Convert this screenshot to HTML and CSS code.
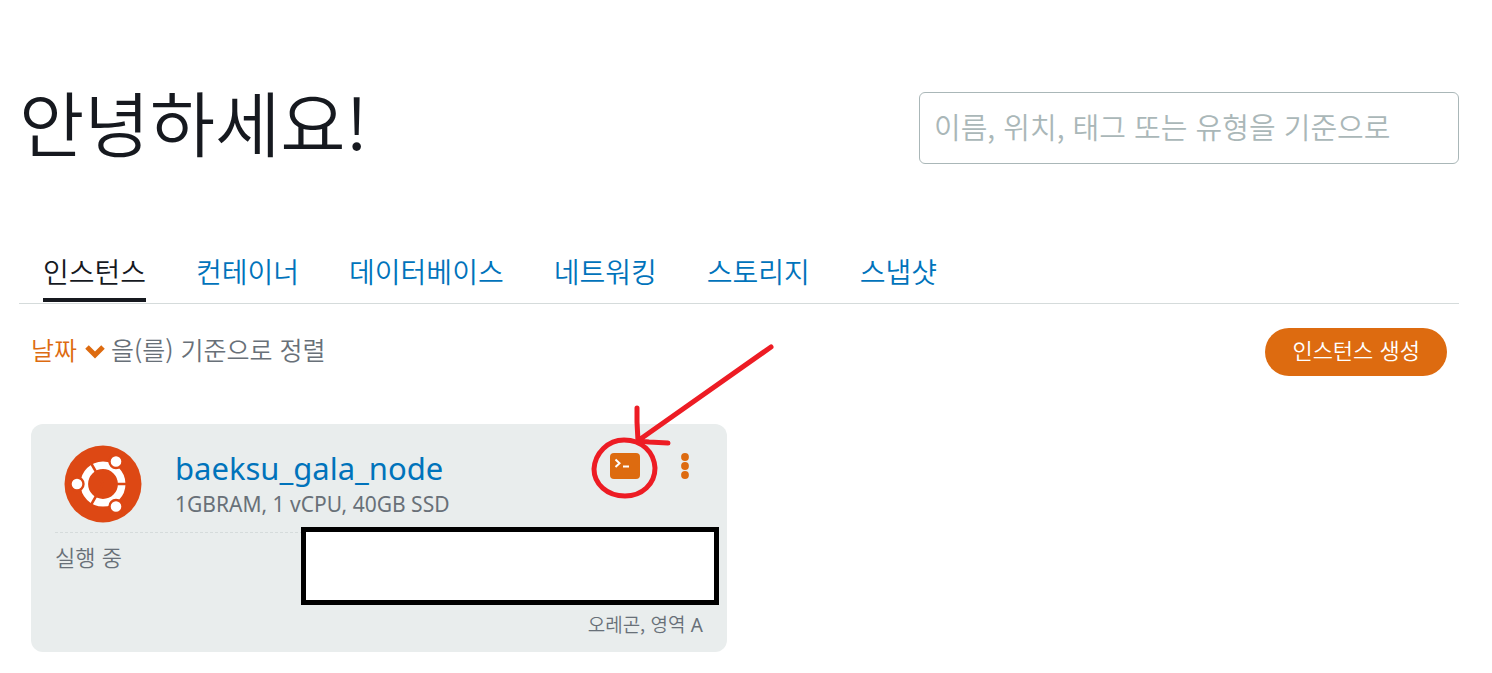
FILE: index.html
```
<!DOCTYPE html>
<html lang="ko">
<head>
    <meta charset="UTF-8">
    <meta name="viewport" content="width=device-width, initial-scale=1.0">
    <title>인스턴스</title>
    <link rel="stylesheet" href="styles.css">
</head>
<body>
    <header class="page-header">
        <h1>안녕하세요!</h1>
        <input type="search" class="search" aria-label="검색" placeholder="이름, 위치, 태그 또는 유형을 기준으로">
    </header>

    <nav class="tabs">
        <a href="#instances" class="active">인스턴스</a>
        <a href="#containers">컨테이너</a>
        <a href="#databases">데이터베이스</a>
        <a href="#networking">네트워킹</a>
        <a href="#storage">스토리지</a>
        <a href="#snapshots">스냅샷</a>
    </nav>

    <main>
        <div class="toolbar">
            <div class="sort">
                <button type="button" class="sort-button">날짜
                    <svg width="20" height="20" viewBox="0 0 20 20"><path d="M2 8l8 8 8-8" fill="none" stroke="#dd6b10" stroke-width="5"/></svg>
                </button>
                <span>을(를) 기준으로 정렬</span>
            </div>
            <button type="button" class="create-button">인스턴스 생성</button>
        </div>

        <div class="cards">
            <article class="card">
                <div class="card-top">
                    <!-- Ubuntu -->
                    <svg class="logo" width="78" height="78" viewBox="0 0 78 78">
                        <circle cx="39" cy="39" r="38.5" fill="#dd4814"/>
                        <circle cx="39" cy="39" r="18.7" fill="none" stroke="#fff" stroke-width="7.6"/>
                        <path d="M39 39h24M39 39L27 18.2M39 39L27 59.8" stroke="#dd4814" stroke-width="2.6"/>
                        <g fill="#fff" stroke="#dd4814" stroke-width="2.4">
                            <circle cx="13" cy="39" r="6.5"/>
                            <circle cx="52" cy="16.5" r="6.5"/>
                            <circle cx="52" cy="61.5" r="6.5"/>
                        </g>
                    </svg>
                    <div class="info">
                        <h2><a href="#baeksu_gala_node">baeksu_gala_node</a></h2>
                        <p>1GBRAM, 1 vCPU, 40GB SSD</p>
                    </div>
                    <div class="actions">
                        <button type="button" class="icon-button" aria-label="터미널 연결">
                            <svg width="30" height="26" viewBox="0 0 30 26">
                                <rect width="30" height="26" rx="4" fill="#dd6b10"/>
                                <path d="M5.5 6.5l4 3.7-4 3.7M13 13.5h6" fill="none" stroke="#fff" stroke-width="2"/>
                            </svg>
                        </button>
                        <button type="button" class="icon-button" aria-label="메뉴">
                            <svg width="8" height="26" viewBox="0 0 8 26" fill="#dd6b10"><circle cx="4" cy="4" r="3.9"/><circle cx="4" cy="13" r="3.9"/><circle cx="4" cy="22" r="3.9"/></svg>
                        </button>
                        <!-- 터미널 버튼 표시 -->
                        <svg class="marker" width="190" height="160" viewBox="0 0 190 160" fill="none" stroke="#ed1c24" stroke-width="5" stroke-linecap="round" stroke-linejoin="round">
                            <path d="M181 7L49 100M47 68v14l1 19M49 101l10 1 19 1"/>
                            <path d="M34 100C18 100 5 113 4 129C4 144 17 156 35 156C52 156 65 144 65 128C64 112 52 100 34 100Z"/>
                        </svg>
                    </div>
                </div>
                <div class="status">실행 중</div>
                <div class="region">오레곤, 영역 <span>A</span></div>
                <div class="cover"></div>
            </article>
        </div>
    </main>
</body>
</html>
```
FILE: styles.css
```
* {
    box-sizing: border-box;
}
body {
    margin: 0;
    padding: 80px 33px 20px 19px;
    background: #fff;
    color: #16191f;
    font-family: "Noto Sans CJK KR", sans-serif;
    font-weight: 350;
}
h1,
h2,
p {
    margin: 0;
    font-weight: 350;
}
a {
    color: #0073bb;
    text-decoration: none;
}
button {
    padding: 0;
    border: none;
    background: none;
    font: inherit;
    cursor: pointer;
}
svg {
    display: block;
}

.page-header {
    display: flex;
    justify-content: space-between;
    align-items: center;
    height: 96px;
}
h1 {
    padding-bottom: 16px;
    font-size: 71px;
    line-height: 96px;
}
.search {
    width: 540px;
    height: 72px;
    padding: 0 14px 4px;
    border: 1px solid #aab7b8;
    border-radius: 6px;
    font: inherit;
    font-size: 29px;
}
.search::placeholder {
    color: #aab7b8;
    opacity: 1;
}

.tabs {
    display: flex;
    gap: 50px;
    margin-top: 68px;
    padding: 0 24px 1px;
    border-bottom: 1px solid #d5dbdb;
    font-size: 28px;
    line-height: 54px;
}
.tabs a {
    border-bottom: 4px solid transparent;
}
.tabs .active {
    color: #16191f;
    border-color: #16191f;
}

main {
    padding: 24px 12px 0;
}
.toolbar,
.sort,
.sort-button {
    display: flex;
    align-items: center;
}
.toolbar {
    justify-content: space-between;
    height: 48px;
}
.sort {
    gap: 6px;
    padding-bottom: 6px;
    color: #687078;
    font-size: 25px;
}
.sort-button {
    gap: 8px;
    color: #dd6b10;
}
.create-button {
    height: 48px;
    padding: 0 27px 6px;
    border-radius: 24px;
    background: #dd6b10;
    color: #fff;
    font-size: 22px;
}

.cards {
    display: grid;
    grid-template-columns: 1fr 1fr;
    gap: 24px;
    margin-top: 48px;
}
.card {
    position: relative;
    padding: 20px 24px 12px;
    border-radius: 12px;
    background: #e9eded;
    color: #687078;
}
.card-top {
    display: flex;
    height: 89px;
    padding-left: 9px;
    border-bottom: 1px dashed #d5dbdb;
}
.logo {
    margin-top: 1px;
}
.info {
    flex: 1;
    margin-left: 33px;
    font-family: "Noto Sans", sans-serif;
}
.info h2 {
    font-size: 31px;
    line-height: 48px;
    font-weight: 400;
}
.info p {
    font-size: 21px;
    line-height: 24px;
    font-weight: 400;
}
.actions {
    position: relative;
    display: flex;
    gap: 41px;
    align-items: flex-start;
    padding: 9px 14px 0 0;
}
.marker {
    position: absolute;
    top: -104px;
    left: -20px;
    pointer-events: none;
}
.status {
    height: 74px;
    font-size: 22px;
    line-height: 46px;
}
.region {
    height: 33px;
    font-size: 19px;
    line-height: 33px;
    text-align: right;
}
.region span {
    font-family: "Noto Sans", sans-serif;
    font-weight: 400;
}
/* IP 주소 가림 */
.cover {
    position: absolute;
    top: 103px;
    right: 8px;
    width: 60%;
    height: 78px;
    border: 5px solid #000;
    background: #fff;
}
```
